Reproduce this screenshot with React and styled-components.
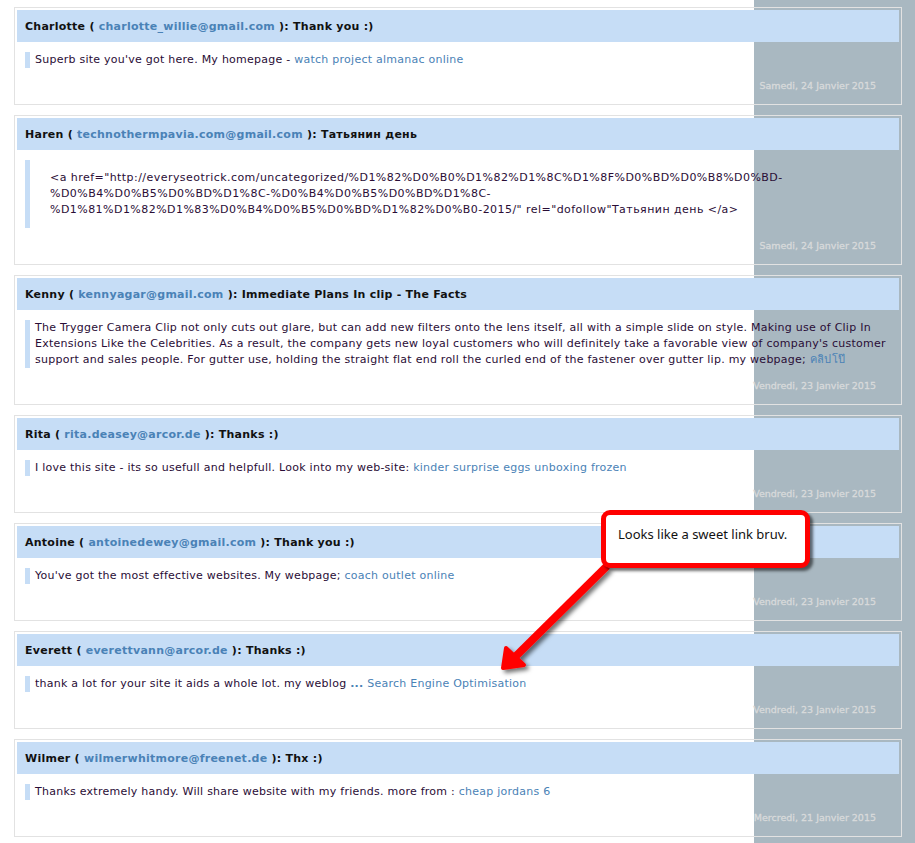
import React from "react";
import styled, { createGlobalStyle } from "styled-components";

const GlobalStyle = createGlobalStyle`
  html, body {
    margin: 0;
    padding: 0;
  }
  body {
    background: #ffffff;
    font-family: "DejaVu Sans", Verdana, sans-serif;
  }
`;

const Page = styled.div`
  position: relative;
  width: 915px;
  height: 843px;
  overflow: hidden;
  box-sizing: border-box;
  padding: 7px 13px 0 14px;
  background: linear-gradient(to right, #ffffff 754px, #a9b8c1 754px);
`;

const CommentList = styled.div`
  display: flex;
  flex-direction: column;
  gap: 10px;
`;

const Card = styled.div`
  border: 1px solid #e2e2e2;
  padding: 2px 2px 12px;
`;

const Header = styled.div`
  box-sizing: border-box;
  background: #c6ddf6;
  height: 32px;
  padding: 1px 0 0 8px;
  line-height: 31px;
  font-size: 11px;
  letter-spacing: 0.25px;
  font-weight: bold;
  color: #111;
  white-space: nowrap;
  overflow: hidden;
`;

const Mail = styled.a`
  color: #4a82b6;
  text-decoration: none;
`;

const Quote = styled.div`
  margin: 10px 0 0 8px;
  border-left: 5px solid #c6ddf6;
  padding: ${(p) => (p.$padded ? "10px 15px 10px 20px" : "0 10px 0 5px")};
  font-size: 11px;
  letter-spacing: ${(p) => (p.$padded ? "0.45px" : "0.25px")};
  line-height: 16px;
  color: #2a0d36;
  white-space: nowrap;
`;

const Link = styled.a`
  color: #4a82b6;
  text-decoration: none;
`;

const Dots = styled.span`
  color: #4a82b6;
  font-weight: bold;
`;

const DateLine = styled.div`
  margin-top: 10px;
  padding-right: 23px;
  text-align: right;
  font-size: 9.5px;
  height: 14px;
  line-height: 15px;
  color: #d8dadb;
  -webkit-text-stroke: 0.3px #d8dadb;
`;

const Callout = styled.div`
  position: absolute;
  left: 601px;
  top: 510px;
  width: 209px;
  height: 58px;
  box-sizing: border-box;
  border: 5px solid #ff0000;
  border-radius: 9px;
  background: #fff;
  box-shadow: 3px 3px 3px rgba(0, 0, 0, 0.55);
  padding: 10px 0 0 12px;
  font-family: "Noto Sans", "Open Sans", sans-serif;
  font-size: 13px;
  color: #111;
`;

const Arrow = styled.svg`
  position: absolute;
  left: 0;
  top: 0;
  pointer-events: none;
`;

const comments = [
  {
    name: "Charlotte",
    mail: "charlotte_willie@gmail.com",
    title: "Thank you :)",
    body: (
      <>
        Superb site you've got here. My homepage -{" "}
        <Link href="#">watch project almanac online</Link>
      </>
    ),
    date: "Samedi, 24 Janvier 2015",
  },
  {
    name: "Haren",
    mail: "technothermpavia.com@gmail.com",
    title: "Татьянин день",
    padded: true,
    body: (
      <>
        &lt;a href="http://everyseotrick.com/uncategorized/%D1%82%D0%B0%D1%82%D1%8C%D1%8F%D0%BD%D0%B8%D0%BD-
        <br />
        %D0%B4%D0%B5%D0%BD%D1%8C-%D0%B4%D0%B5%D0%BD%D1%8C-
        <br />
        %D1%81%D1%82%D1%83%D0%B4%D0%B5%D0%BD%D1%82%D0%B0-2015/" rel="dofollow"Татьянин день &lt;/a&gt;
      </>
    ),
    date: "Samedi, 24 Janvier 2015",
  },
  {
    name: "Kenny",
    mail: "kennyagar@gmail.com",
    title: "Immediate Plans In clip - The Facts",
    body: (
      <>
        The Trygger Camera Clip not only cuts out glare, but can add new filters onto the lens itself, all with a simple slide on style. Making use of Clip In
        <br />
        Extensions Like the Celebrities. As a result, the company gets new loyal customers who will definitely take a favorable view of company's customer
        <br />
        support and sales people. For gutter use, holding the straight flat end roll the curled end of the fastener over gutter lip. my webpage;{" "}
        <Link href="#">คลิปโป๊</Link>
      </>
    ),
    date: "Vendredi, 23 Janvier 2015",
  },
  {
    name: "Rita",
    mail: "rita.deasey@arcor.de",
    title: "Thanks :)",
    body: (
      <>
        I love this site - its so usefull and helpfull. Look into my web-site:{" "}
        <Link href="#">kinder surprise eggs unboxing frozen</Link>
      </>
    ),
    date: "Vendredi, 23 Janvier 2015",
  },
  {
    name: "Antoine",
    mail: "antoinedewey@gmail.com",
    title: "Thank you :)",
    body: (
      <>
        You've got the most effective websites. My webpage;{" "}
        <Link href="#">coach outlet online</Link>
      </>
    ),
    date: "Vendredi, 23 Janvier 2015",
  },
  {
    name: "Everett",
    mail: "everettvann@arcor.de",
    title: "Thanks :)",
    body: (
      <>
        thank a lot for your site it aids a whole lot. my weblog <Dots>...</Dots>{" "}
        <Link href="#">Search Engine Optimisation</Link>
      </>
    ),
    date: "Vendredi, 23 Janvier 2015",
  },
  {
    name: "Wilmer",
    mail: "wilmerwhitmore@freenet.de",
    title: "Thx :)",
    body: (
      <>
        Thanks extremely handy. Will share website with my friends. more from :{" "}
        <Link href="#">cheap jordans 6</Link>
      </>
    ),
    date: "Mercredi, 21 Janvier 2015",
  },
];

function Comment({ c }) {
  return (
    <Card>
      <Header>
        {c.name} ( <Mail href="#">{c.mail}</Mail> ): {c.title}
      </Header>
      <Quote $padded={c.padded}>{c.body}</Quote>
      <DateLine>{c.date}</DateLine>
    </Card>
  );
}

export default function App() {
  return (
    <>
      <GlobalStyle />
      <Page>
        <CommentList>
          {comments.map((c) => (
            <Comment key={c.name} c={c} />
          ))}
        </CommentList>

        <Arrow width="915" height="843" viewBox="0 0 915 843">
          <defs>
            <filter id="shadow" x="-20%" y="-20%" width="140%" height="140%">
              <feDropShadow dx="3" dy="3" stdDeviation="2" floodColor="#000" floodOpacity="0.55" />
            </filter>
          </defs>
          <g filter="url(#shadow)">
            <line x1="607" y1="566" x2="515" y2="657" stroke="#ff0000" strokeWidth="8" />
            <polygon points="503,668 506,648 524,665" fill="#ff0000" stroke="#ff0000" strokeWidth="4" strokeLinejoin="round" />
          </g>
        </Arrow>

        <Callout>Looks like a sweet link bruv.</Callout>
      </Page>
    </>
  );
}
